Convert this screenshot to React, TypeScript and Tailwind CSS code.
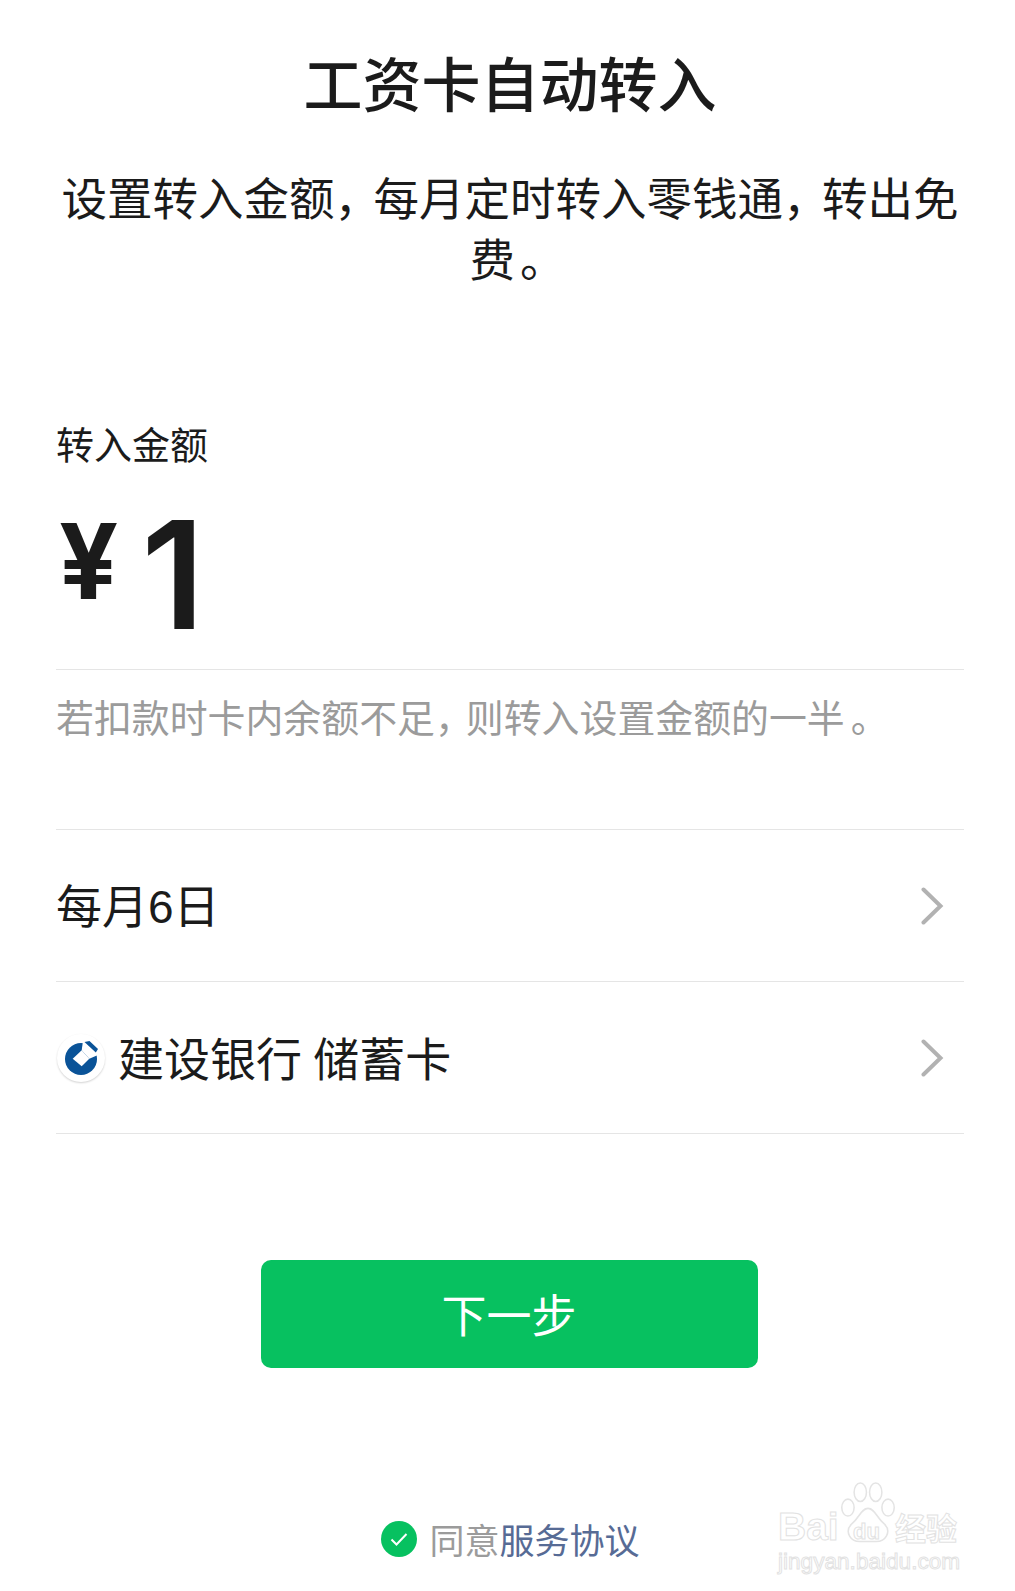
import { ReactNode } from 'react'

const CJK = 'font-["Noto_Sans_CJK_SC","Liberation_Sans",sans-serif]'

function Chevron() {
  return (
    <svg width="24" height="38" viewBox="0 0 24 38" fill="none" className="shrink-0">
      <path d="M2.500 2.500 L19.500 19 L2.500 35.500" stroke="#b2b2b2" strokeWidth="4" strokeLinecap="round" strokeLinejoin="miter" />
    </svg>
  )
}

function BankLogo() {
  return (
    <div className="w-[48px] h-[48px] ml-[1px] rounded-full bg-white shadow-[0_1px_2px_rgba(0,0,0,0.18)] flex items-center justify-center shrink-0">
      <svg width="34" height="34" viewBox="0 0 34 34">
        <circle cx="17" cy="18" r="16" fill="#0a5398" />
        <path d="M17.700 9.300 L25.300 17.700 L17.700 25.300 L8.700 17.700 Z" fill="#fff" />
        <path d="M17.700 9.300 L19 0 L36 13 L25.300 17.700 Z" fill="#fff" />
        <path d="M20.500 1 L25.500 0 L34 8 L31.800 11.500 Z" fill="#0a5398" />
      </svg>
    </div>
  )
}

function Row({ children }: { children: ReactNode }) {
  return (
    <div className="h-[152px] border-b border-[#e5e5e5] flex items-center justify-between pr-[19px] text-[46px] leading-none text-[#1b1b1b]">
      {children}
    </div>
  )
}

function Watermark() {
  return (
    <div className="absolute left-[778px] top-[1482px] w-[190px]">
      <svg width="54" height="62" viewBox="0 0 70 80" fill="none" stroke="#e4e4e4" strokeWidth="2" className="absolute left-[63px] top-0">
        <ellipse cx="9" cy="33" rx="8" ry="11" />
        <ellipse cx="25" cy="13" rx="8" ry="12" />
        <ellipse cx="45" cy="13" rx="8" ry="12" />
        <ellipse cx="61" cy="33" rx="8" ry="11" />
        <path d="M35 34 C26 34 24 46 14 54 C4 64 12 78 26 77 L44 77 C58 78 66 64 56 54 C46 46 44 34 35 34 Z" />
      </svg>
      <div className="pt-[25px] flex items-center font-['Liberation_Sans',sans-serif] text-[39px] leading-none font-bold text-white [-webkit-text-stroke:1px_#e2e2e2]">
        <span className="w-[60px]">Bai</span>
        <span className="w-[57px] text-center text-[22px] mt-[10px]">du</span>
        <span className={`${CJK} text-[31px]`}>经验</span>
      </div>
      <div className="mt-[5px] font-['Liberation_Sans',sans-serif] text-[22.600px] leading-none text-white [-webkit-text-stroke:1px_#e2e2e2]">
        jingyan.baidu.com
      </div>
    </div>
  )
}

export default function App() {
  return (
    <div className={`relative w-[1015px] h-[1591px] bg-white overflow-hidden ${CJK}`}>
      <div className="pt-[46px] pl-[56px] pr-[51px]">
        <h1 className="text-center text-[59px] leading-[72px] font-medium text-[#1b1b1b]">工资卡自动转入</h1>

        <p className="mt-[48px] text-center text-[45.500px] leading-[61px] text-[#1b1b1b] -mx-[10px]">
          设置转入金额<span className="tracking-[-6.500px]">，</span>每月定时转入零钱通<span className="tracking-[-6.500px]">，</span>转出免<span className="ml-[15px]">费</span><span className="ml-[5px]">。</span>
        </p>

        <div className="mt-[131px] text-[38px] leading-[48px] text-[#1b1b1b]">转入金额</div>

        <div className="h-[203px] pb-[14px] border-b border-[#e5e5e5] flex items-center">
          <span className="font-['Inter',sans-serif] font-bold text-[104px] leading-none text-[#1b1b1b] ml-[3px]">¥</span>
          <span className="font-['Inter',sans-serif] font-semibold text-[150px] leading-none text-[#1b1b1b] ml-[23px] mt-[28px]">1</span>
        </div>

        <p className="pt-[22px] h-[160px] border-b border-[#e5e5e5] text-[37.900px] leading-[48px] text-[#9b9b9b]">
          若扣款时卡内余额不足<span className="tracking-[-7px]">，</span>则转入设置金额的一半<span className="ml-[6px]">。</span>
        </p>

        <Row><span className="mb-[2px]">每月<span className="font-['Liberation_Sans',sans-serif]">6</span>日</span><Chevron /></Row>
        <Row>
          <div className="flex items-center gap-[13px]">
            <BankLogo />
            <span className="[word-spacing:1px] mb-[4px]">建设银行 储蓄卡</span>
          </div>
          <Chevron />
        </Row>

        <div className="mt-[126px] flex justify-center pr-[2px]">
          <button className="w-[497px] h-[108px] rounded-[10px] bg-[#07c160] text-white text-[45px]">下一步</button>
        </div>

        <div className="mt-[152px] flex justify-center items-center gap-[12px] text-[35px] leading-none">
          <svg width="36" height="36" viewBox="0 0 36 36" className="shrink-0 mt-[1px] ml-[1px]">
            <circle cx="18" cy="18" r="18" fill="#07c160" />
            <path d="M10.500 18.500 L15.500 23.500 L25.500 13" fill="none" stroke="#fff" strokeWidth="2" />
          </svg>
          <span className="text-[#9b9b9b]">同意<span className="text-[#576b95]">服务协议</span></span>
        </div>
      </div>
      <Watermark />
    </div>
  )
}
